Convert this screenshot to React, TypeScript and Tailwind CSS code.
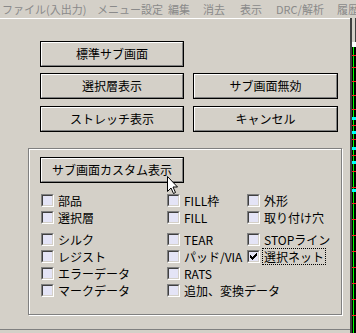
import React from "react";

const font = { fontFamily: '"Noto Sans CJK JP", "Liberation Sans", sans-serif' };

const menus = [
  { label: "ファイル(入出力)", w: "w-[95px]" },
  { label: "メニュー設定", w: "w-[71px]" },
  { label: "編集", w: "w-[35px]" },
  { label: "消去", w: "w-[37px]" },
  { label: "表示", w: "w-[36px]" },
  { label: "DRC/解析", w: "w-[61px]" },
  { label: "履歴", w: "w-[40px]" },
];

// classic win32 push button
const Btn = ({ label, w }: { label: string; w: string }) => (
  <div className={`${w} h-[26px] border border-black bg-[#d4d0c8]`}>
    <div className="h-full w-full border-t border-l border-white border-b border-r border-b-[#808080] border-r-[#808080] flex items-center justify-center text-[12px] text-black">
      {label}
    </div>
  </div>
);

const Box = ({ checked }: { checked?: boolean }) => (
  <div className="w-[13px] h-[13px] shrink-0 border-t border-l border-[#808080] border-b border-r border-b-white border-r-white">
    <div className="w-full h-full border-t border-l border-[#404040] border-b border-r border-b-[#d4d0c8] border-r-[#d4d0c8] bg-[#e4e4f6] flex items-center justify-center">
      {checked && (
        <svg width="7" height="7" viewBox="0 0 7 7">
          <path d="M0 2h1v1h1v1h1v-1h1v-1h1v-1h1v-1h1v3h-1v1h-1v1h-1v1h-1v1h-1v-1h-1v-1h-1z" fill="#000" />
        </svg>
      )}
    </div>
  </div>
);

const Check = ({ label, w, checked, focus }: { label?: string; w: string; checked?: boolean; focus?: boolean }) => (
  <div className={`${w} flex items-center gap-[4px]`}>
    {label !== undefined && (
      <>
        <Box checked={checked} />
        <span
          className={`text-[12px] leading-[15px] text-black whitespace-nowrap ${
            focus ? "outline outline-1 outline-dotted outline-black px-[1px] -ml-[1px]" : ""
          }`}
        >
          {label}
        </span>
      </>
    )}
  </div>
);

const rows: [string, string, string | undefined][] = [
  ["部品", "FILL枠", "外形"],
  ["選択層", "FILL", "取り付け穴"],
  ["シルク", "TEAR", "STOPライン"],
  ["レジスト", "パッド/VIA", "選択ネット"],
  ["エラーデータ", "RATS", undefined],
  ["マークデータ", "追加、変換データ", undefined],
];

export default function App() {
  return (
    <div className="w-[356px] h-[333px] bg-[#d4d0c8] relative overflow-hidden" style={font}>
      {/* menu bar */}
      <div className="h-[18px] flex items-center pl-[2px] text-[11px] text-[#8a8a8a] whitespace-nowrap">
        {menus.map((m) => (
          <span key={m.label} className={`${m.w} shrink-0`}>
            {m.label}
          </span>
        ))}
      </div>

      <div className="flex h-[315px]">
        {/* dialog */}
        <div className="w-[350px] border-t border-white flex flex-col">
          <div className="pl-[40px] pt-[22px] flex flex-col gap-[6px]">
            <Btn label="標準サブ画面" w="w-[144px]" />
            <div className="flex gap-[9px]">
              <Btn label="選択層表示" w="w-[144px]" />
              <Btn label="サブ画面無効" w="w-[145px]" />
            </div>
            <div className="flex gap-[9px] mt-[1px]">
              <Btn label="ストレッチ表示" w="w-[144px]" />
              <Btn label="キャンセル" w="w-[145px]" />
            </div>
          </div>

          {/* group box */}
          <div className="ml-[28px] mt-[16px] w-[314px] h-[167px] border border-[#808080] shadow-[inset_1px_1px_0_#fff,1px_1px_0_#fff] pl-[11px] pt-[8px]">
            <Btn label="サブ画面カスタム表示" w="w-[144px]" />
            <div className="mt-[10px] pl-[1px] flex flex-col">
              {rows.map(([a, b, c], i) => (
                <div key={a} className={`flex h-[15px] ${i === 2 ? "mt-[7px]" : i > 0 ? "mt-[2px]" : ""}`}>
                  <Check label={a} w="w-[126px]" />
                  <Check label={b} w="w-[80px]" />
                  <Check label={c} w="w-[90px]" checked={c === "選択ネット"} focus={c === "選択ネット"} />
                </div>
              ))}
            </div>
          </div>
          <div className="flex-1" />
          <div className="h-[1px] bg-[#808080] mb-[3px]" />
        </div>

        {/* canvas strip behind the dialog */}
        <div className="w-[6px] flex flex-col border-l-2 border-[#404040]">
          <div className="h-[24px] bg-[#d4d0c8] border-r border-[#404040]" />
          <div className="h-[5px] bg-white" />
          <div className="flex-1 bg-black relative">
            <div className="absolute left-[1px] top-0 bottom-0 w-[1px] bg-[#00ff00]" />
            {[8, 20, 34, 48, 62, 78, 92, 108, 124, 140, 156, 172, 188, 204, 220, 236, 252, 268].map((y) => (
              <div key={y} className="absolute left-0 w-[4px] h-[1px] bg-[#ff2020]" style={{ top: y }} />
            ))}
            {[70, 84, 100, 114, 142].map((y) => (
              <div key={y} className="absolute left-0 w-[4px] h-[3px] bg-[#00ffff]" style={{ top: y }} />
            ))}
          </div>
        </div>
      </div>

      {/* mouse cursor */}
      <svg className="absolute left-[167px] top-[176px]" width="12" height="19" viewBox="0 0 12 19">
        <path d="M0.5 0.5 L0.5 15.5 L4 12 L6.5 17.5 L8.5 16.5 L6 11 L10.5 11 Z" fill="#fff" stroke="#000" strokeWidth="1" />
      </svg>
    </div>
  );
}
